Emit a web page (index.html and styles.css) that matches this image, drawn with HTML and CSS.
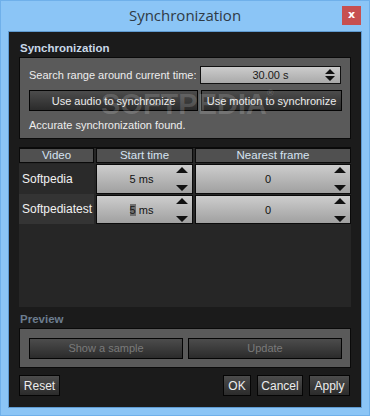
FILE: index.html
```html
<!DOCTYPE html>
<html>
<head>
<meta charset="utf-8">
<link rel="stylesheet" href="styles.css">
</head>
<body>
<div class="window">
  <div class="titlebar">
    <div class="title">Synchronization</div>
    <div class="close">x</div>
  </div>
  <div class="client">
    <div class="group-label">Synchronization</div>
    <div class="group sync">
      <div class="row range">
        <span class="label">Search range around current time:</span>
        <div class="spin main-spin"><span class="val">30.00 s</span>
          <svg class="arrows" width="10" height="12" viewBox="0 0 10 12"><path d="M5 0 L10 5 L0 5 Z M0 7 L10 7 L5 12 Z" fill="#111"/></svg>
        </div>
      </div>
      <div class="row btns">
        <div class="btn wide">Use audio to synchronize</div>
        <div class="btn wide2">Use motion to synchronize</div>
      </div>
      <div class="status">Accurate synchronization found.</div>
    </div>

    <div class="table">
      <div class="thead">
        <div class="th c1">Video</div>
        <div class="th c2">Start time</div>
        <div class="th c3">Nearest frame</div>
      </div>
      <div class="tr r1">
        <div class="td name c1">Softpedia</div>
        <div class="td cellspin c2"><span class="val">5 ms</span>
          <svg class="arrows2" width="12" height="24" viewBox="0 0 12 24"><path d="M6 0 L12 6 L0 6 Z M0 18 L12 18 L6 24 Z" fill="#111"/></svg>
        </div>
        <div class="td cellspin c3"><span class="val">0</span>
          <svg class="arrows2" width="12" height="24" viewBox="0 0 12 24"><path d="M6 0 L12 6 L0 6 Z M0 18 L12 18 L6 24 Z" fill="#111"/></svg>
        </div>
      </div>
      <div class="tr r2">
        <div class="td name c1">Softpediatest</div>
        <div class="td cellspin c2"><span class="val"><span class="sel">5</span> ms</span>
          <svg class="arrows2" width="12" height="24" viewBox="0 0 12 24"><path d="M6 0 L12 6 L0 6 Z M0 18 L12 18 L6 24 Z" fill="#111"/></svg>
        </div>
        <div class="td cellspin c3"><span class="val">0</span>
          <svg class="arrows2" width="12" height="24" viewBox="0 0 12 24"><path d="M6 0 L12 6 L0 6 Z M0 18 L12 18 L6 24 Z" fill="#111"/></svg>
        </div>
      </div>
    </div>

    <div class="group-label disabled">Preview</div>
    <div class="group preview">
      <div class="btn disabled-btn sample">Show a sample</div>
      <div class="btn disabled-btn update">Update</div>
    </div>

    <div class="footer">
      <div class="btn small reset">Reset</div>
      <div class="spacer"></div>
      <div class="btn small ok">OK</div>
      <div class="btn small cancel">Cancel</div>
      <div class="btn small apply">Apply</div>
    </div>
    <div class="watermark">SOFTPEDIA<sup>®</sup></div>
  </div>
</div>
</body>
</html>
```

FILE: styles.css
```css
* { box-sizing: border-box; }
html, body { margin: 0; padding: 0; }
body {
  width: 370px;
  height: 416px;
  background: #8bc5f6;
  font-family: "Liberation Sans", Arial, sans-serif;
  font-size: 11px;
  overflow: hidden;
}
.window {
  width: 370px;
  height: 416px;
  border: 1px solid #6fb0ea;
  background: #8bc5f6;
  position: relative;
}
.titlebar {
  height: 30px;
  display: flex;
  align-items: center;
  justify-content: center;
  position: relative;
}
.title {
  font-family: "Open Sans", "Noto Sans", sans-serif;
  font-size: 15px;
  color: #2f3a45;
  margin-top: -2px;
}
.close {
  position: absolute;
  right: 8px;
  top: 5px;
  width: 19px;
  height: 19px;
  background: #c75050;
  color: #fff;
  font-weight: bold;
  font-size: 11px;
  line-height: 17px;
  text-align: center;
  font-family: "DejaVu Sans", sans-serif;
}
.client {
  margin: 0 7px;
  height: 377px;
  background: #1b1b1b;
  border: 1px solid #5f9ad0;
  padding: 9px 10px 0 10px;
  position: relative;
}
.group-label {
  font-weight: bold;
  color: #c9d8e8;
  font-size: 11.5px;
  height: 15px;
  line-height: 15px;
  margin-bottom: 1px;
  padding-left: 1px;
}
.group-label.disabled { color: #6c7d8f; }
.group {
  background: #5a5a5a;
  border: 1px solid #0a0a0a;
}
.sync {
  height: 82px;
  padding: 8px 9px 0 9px;
}
.row { display: flex; align-items: center; }
.range { height: 18px; justify-content: space-between; }
.label, .status { color: #ededed; font-size: 11px; white-space: nowrap; }
.spin {
  width: 141px;
  flex: none;
  height: 18px;
  border: 1px solid #111;
  background: linear-gradient(#cccccc, #a9a9a9);
  position: relative;
  display: flex;
  align-items: center;
  justify-content: center;
  color: #1a1a1a;
  font-size: 11px;
}
.arrows { position: absolute; right: 5px; top: 2px; }
.btns { margin-top: 6px; gap: 3px; }
.btn {
  background: linear-gradient(#4c4c4c, #2b2b2b);
  border: 1px solid #050505;
  color: #ececec;
  display: flex;
  align-items: center;
  justify-content: center;
  height: 21px;
  font-size: 11px;
  white-space: nowrap;
  flex: none;
}
.wide { width: 169px; }
.wide2 { width: 141px; }
.status { margin-top: 7px; height: 14px; line-height: 14px; }
.table {
  margin-top: 8px;
  height: 160px;
  background: #262626;
  border-top: 1px solid #0a0a0a;
}
.thead, .tr { display: flex; gap: 2px; }
.th {
  height: 15px;
  background: #505050;
  border: 1px solid #0a0a0a;
  color: #d6e3f0;
  display: flex; align-items: center; justify-content: center;
  line-height: 13px;
  font-size: 11.5px;
}
.c1 { width: 75px; }
.c2 { width: 97px; }
.c3 { width: 156px; }
.thead { margin-bottom: 1px; }
.tr { height: 30px; }
.r1 .name { background: #2a2a2a; }
.r2 .name { background: #343434; }
.name {
  color: #f2f2f2;
  display: flex; align-items: center;
  padding-left: 3px;
  font-size: 12px;
}
.cellspin {
  position: relative;
  background: linear-gradient(#cdcdcd, #a0a0a0);
  border: 1px solid #0a0a0a;
  display: flex; align-items: center; justify-content: center;
  color: #111;
  font-size: 11px;
}
.r2 .cellspin { margin-top: 1px; }
.arrows2 { position: absolute; right: 4px; top: 2px; }
.sel { background: #6f6f6f; color: #1a1a1a; }
.c2 .val { margin-left: -6px; }
.c3 .val { margin-left: -10px; }
.table + .group-label { margin-top: 5px; }
.preview {
  height: 40px;
  display: flex;
  align-items: center;
  padding: 0 9px;
  gap: 5px;
}
.disabled-btn { color: #7a7a7a; height: 21px; }
.sample { width: 154px; }
.update { width: 154px; }
.footer {
  display: flex;
  margin-top: 7px;
  gap: 6px;
  padding-right: 1px;
}
.spacer { flex: 1; }
.small { height: 21px; font-size: 12px; }
.reset { width: 41px; }
.ok { width: 28px; }
.cancel { width: 46px; }
.apply { width: 41px; }
.watermark {
  position: absolute;
  left: 92px;
  top: 56px;
  font-family: "Liberation Sans", sans-serif;
  font-weight: bold;
  font-size: 29px;
  color: rgba(255,255,255,0.16);
  pointer-events: none;
}
.watermark sup { font-size: 9px; vertical-align: top; position: relative; top: 0; }
```
